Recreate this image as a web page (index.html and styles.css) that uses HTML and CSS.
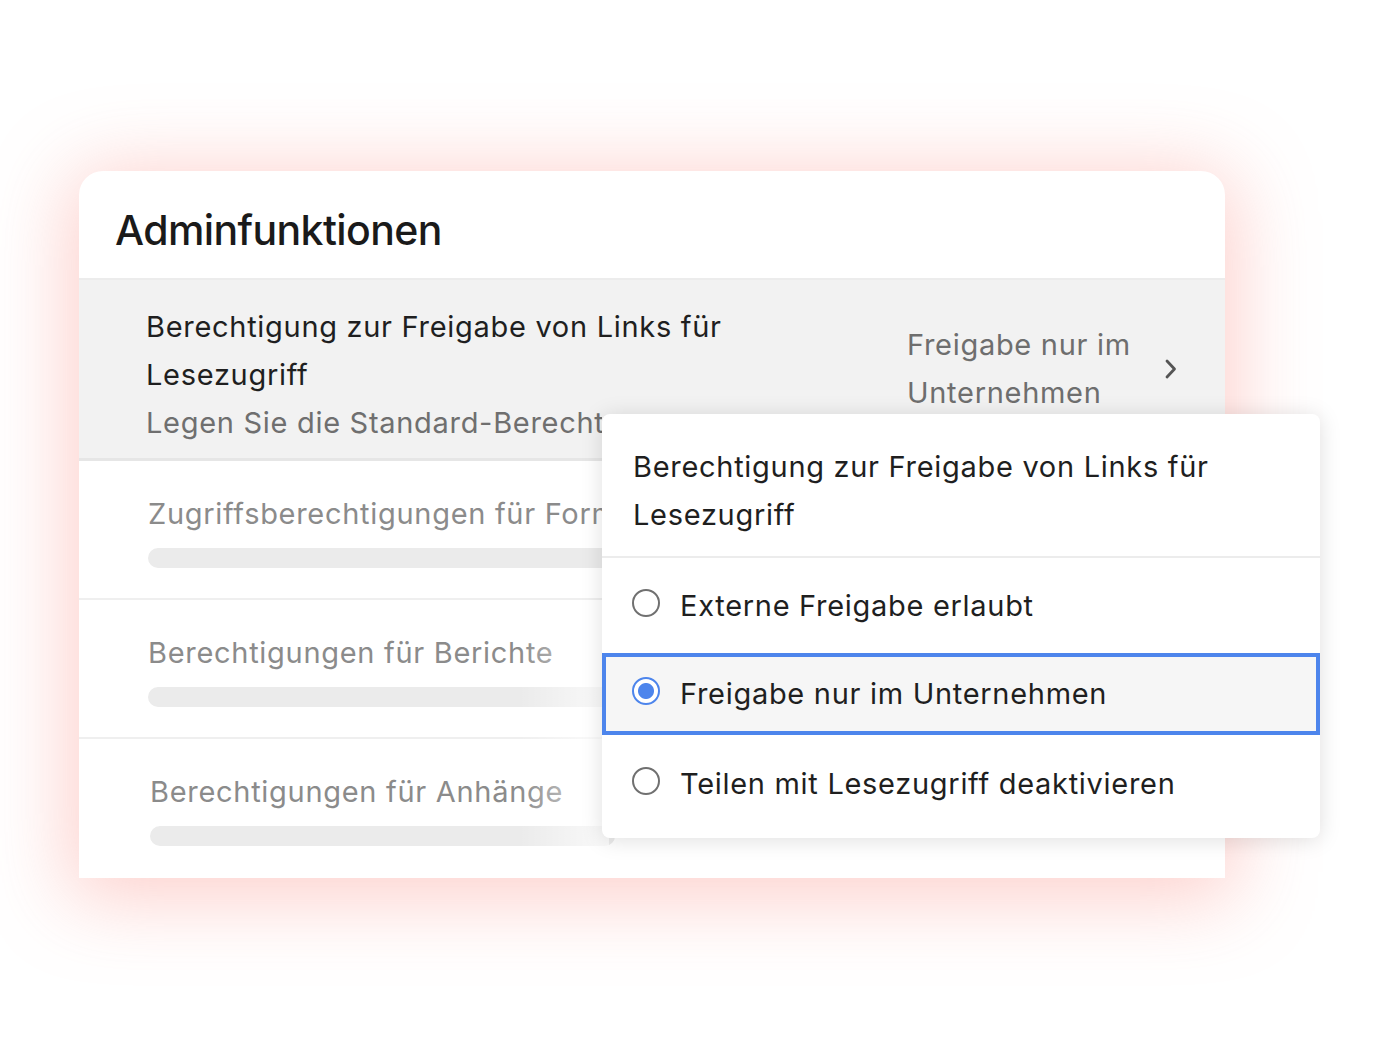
FILE: index.html
```html
<!DOCTYPE html>
<html lang="de">
<head>
<meta charset="utf-8">
<title>Adminfunktionen</title>
<link rel="stylesheet" href="styles.css">
</head>
<body>
<div class="stage">
  <section class="card">
    <header class="card-head">
      <h1 class="card-title">Adminfunktionen</h1>
    </header>
    <div class="row row-active">
      <div class="row-main">
        <div class="row-title">Berechtigung zur Freigabe von Links für Lesezugriff</div>
        <div class="row-sub">Legen Sie die Standard-Berechtigung für Links zum Lesezugriff fest</div>
      </div>
      <div class="row-value">Freigabe nur im Unternehmen</div>
      <svg class="chevron" width="14" height="22" viewBox="0 0 14 22"><path d="M3 3 L10.5 11 L3 19" fill="none" stroke="#555" stroke-width="2.8" stroke-linecap="round" stroke-linejoin="round"/></svg>
    </div>
    <div class="row row-muted">
      <div class="row-label">Zugriffsberechtigungen für Formulare</div>
      <div class="skeleton"></div>
    </div>
    <div class="row row-muted">
      <div class="row-label">Berechtigungen für Berichte</div>
      <div class="skeleton"></div>
    </div>
    <div class="row row-muted row-last">
      <div class="row-label">Berechtigungen für Anhänge</div>
      <div class="skeleton"></div>
    </div>
    <div class="fade"></div>

    <div class="popup">
      <div class="popup-head">Berechtigung zur Freigabe von Links für Lesezugriff</div>
      <div class="option opt-1">
        <span class="radio"></span>
        <span class="opt-label">Externe Freigabe erlaubt</span>
      </div>
      <div class="option opt-2 selected">
        <span class="radio radio-on"></span>
        <span class="opt-label">Freigabe nur im Unternehmen</span>
      </div>
      <div class="option opt-3">
        <span class="radio"></span>
        <span class="opt-label">Teilen mit Lesezugriff deaktivieren</span>
      </div>
    </div>
  </section>
</div>
</body>
</html>
```

FILE: styles.css
```css
html, body {
  margin: 0;
  padding: 0;
  background: #ffffff;
}
body {
  width: 1400px;
  height: 1048px;
  overflow: hidden;
  font-family: Inter, "Noto Sans", "Liberation Sans", sans-serif;
  color: #1d1d1f;
}
.stage {
  padding: 171px 0 0 79px;
}
.card {
  position: relative;
  width: 1146px;
  height: 707px;
  background: #ffffff;
  border-radius: 24px 24px 0 0;
  box-shadow: 0 10px 80px 10px rgba(250, 140, 130, 0.42);
  display: flex;
  flex-direction: column;
}
.card-head {
  height: 109px;
  box-sizing: border-box;
  border-bottom: 2px solid #ececec;
  display: flex;
  align-items: center;
  padding: 10px 0 0 36px;
}
.card-title {
  margin: 0;
  font-size: 41px;
  font-weight: 500;
  letter-spacing: -0.6px;
  color: #1a1a1a;
}
.row {
  box-sizing: border-box;
}
.row-active {
  background: #f2f2f2;
  height: 181px;
  border-bottom: 3px solid #e6e6e6;
  display: flex;
  align-items: center;
  padding: 0 0 0 67px;
}
.row-main {
  width: 690px;
  align-self: flex-start;
  padding-top: 23px;
}
.row-title {
  width: 610px;
  font-size: 29px;
  line-height: 48px;
  color: #1f1f1f;
  letter-spacing: 0.7px;
}
.row-sub {
  width: 456px;
  overflow: hidden;
  font-size: 29px;
  line-height: 48px;
  color: #6f6f6f;
  white-space: nowrap;
  letter-spacing: 0.7px;
}
.row-value {
  width: 240px;
  margin-left: 71px;
  font-size: 29px;
  line-height: 48px;
  color: #6e6e6e;
  letter-spacing: 0.7px;
}
.chevron {
  margin-left: 17px;
}
.row-muted {
  height: 139px;
  border-bottom: 2px solid #efefef;
  padding: 32px 0 0 69px;
}
.row-last {
  border-bottom: none;
  flex: 1;
  padding-left: 71px;
}
.row-label {
  width: 454px;
  overflow: hidden;
  font-size: 29px;
  line-height: 42px;
  color: #8b8b8b;
  letter-spacing: 0.7px;
  white-space: nowrap;
}
.skeleton {
  margin-top: 13px;
  width: 465px;
  height: 20px;
  border-radius: 10px;
  background: #ebebeb;
}
.fade {
  position: absolute;
  left: 440px;
  top: 462px;
  width: 90px;
  height: 245px;
  background: linear-gradient(to right, rgba(255,255,255,0), rgba(255,255,255,0.75));
  pointer-events: none;
}
.popup {
  position: absolute;
  left: 523px;
  top: 243px;
  width: 718px;
  height: 424px;
  box-sizing: border-box;
  background: #ffffff;
  border-radius: 8px;
  box-shadow: 0 2px 22px rgba(0, 0, 0, 0.13);
  display: flex;
  flex-direction: column;
}
.popup-head {
  padding: 29px 60px 17px 31px;
  font-size: 29px;
  line-height: 48px;
  color: #1f1f1f;
  letter-spacing: 0.7px;
  border-bottom: 2px solid #ececec;
}
.option {
  display: flex;
  align-items: center;
  box-sizing: border-box;
  padding-left: 30px;
  gap: 20px;
}
.opt-1 { height: 95px; }
.opt-2 { height: 82px; }
.opt-3 { height: 98px; }
.selected {
  background: #f6f6f6;
  border: 4px solid #4d85ec;
  padding-left: 26px;
}
.radio {
  width: 28px;
  height: 28px;
  box-sizing: border-box;
  border: 2px solid #707070;
  border-radius: 50%;
  background: #ffffff;
  flex: none;
  margin-top: -6px;
}
.radio-on {
  border: 2px solid #4d85ec;
  background: radial-gradient(circle, #4d85ec 0 7.5px, #ffffff 8.5px);
}
.opt-label {
  font-size: 29px;
  line-height: 40px;
  color: #1f1f1f;
  letter-spacing: 0.7px;
}
```
